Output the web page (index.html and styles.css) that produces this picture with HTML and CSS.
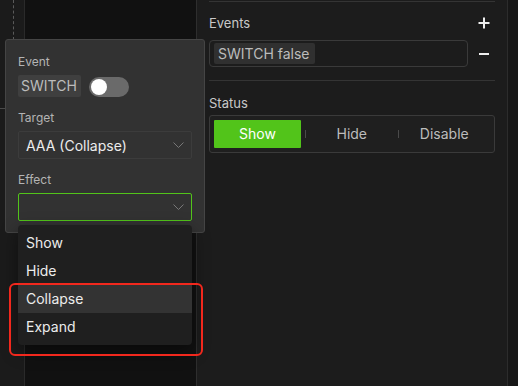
FILE: index.html
```html
<!DOCTYPE html>
<html lang="en">
<head>
    <meta charset="UTF-8">
    <meta name="viewport" content="width=device-width, initial-scale=1.0">
    <title>Interaction Editor</title>
    <link rel="stylesheet" href="styles.css">
</head>
<body>
    <div class="workspace">
        <aside class="rail"><span class="guide"></span><span class="tick"></span></aside>
        <main class="canvas"></main>

        <section class="panel">
            <div class="divider first"></div>

            <div class="events">
                <span class="panel-label">Events</span>
                <button class="icon-btn" title="Add">
                    <svg width="12" height="12" viewBox="0 0 12 12"><path d="M6 0.5v11M0.5 6h11" stroke="#eeeeee" stroke-width="2"/></svg>
                </button>
                <div class="events-box"><span class="tag">SWITCH false</span></div>
                <button class="icon-btn" title="Remove">
                    <svg width="12" height="12" viewBox="0 0 12 12"><path d="M1 6h10" stroke="#eeeeee" stroke-width="2"/></svg>
                </button>
            </div>

            <div class="divider"></div>

            <div class="status">
                <span class="panel-label">Status</span>
                <div class="segmented">
                    <span class="segment active">Show</span>
                    <span class="sep"></span>
                    <span class="segment">Hide</span>
                    <span class="sep"></span>
                    <span class="segment">Disable</span>
                </div>
            </div>
        </section>

        <div class="edge"></div>
    </div>

    <!-- event editor popover -->
    <div class="popover">
        <div class="field">
            <span class="field-label">Event</span>
            <div class="event-row">
                <span class="tag light">SWITCH</span>
                <span class="toggle"><span class="knob"></span></span>
            </div>
        </div>
        <div class="field">
            <span class="field-label">Target</span>
            <div class="select">
                <span>AAA (Collapse)</span>
                <svg width="11" height="7" viewBox="0 0 11 7"><path d="M0.5 0.5l5 5 5-5" fill="none" stroke="#777777"/></svg>
            </div>
        </div>
        <div class="field">
            <span class="field-label">Effect</span>
            <div class="select focused">
                <span></span>
                <svg width="11" height="7" viewBox="0 0 11 7"><path d="M0.5 0.5l5 5 5-5" fill="none" stroke="#777777"/></svg>
            </div>
        </div>
    </div>

    <ul class="dropdown">
        <li>Show</li>
        <li>Hide</li>
        <li class="hover">Collapse</li>
        <li>Expand</li>
    </ul>

    <div class="annotation"></div>
</body>
</html>
```

FILE: styles.css
```css
/* General Styles */
body, html {
    margin: 0;
    padding: 0;
    height: 100%;
    overflow: hidden;
    font-family: 'Inter', 'Noto Sans', sans-serif;
    background-color: #1b1b1b;
    color: #e6e6e6;
}

.workspace {
    display: flex;
    height: 386px;
}

.rail {
    width: 24px;
    background: #1b1b1b;
    border-right: 1px solid #2a2a2a;
    position: relative;
}

.rail .guide {
    position: absolute;
    left: 13px;
    top: 0;
    height: 40px;
    border-left: 1px dashed #5a5a5a;
}

.rail .tick {
    position: absolute;
    left: 0;
    top: 108px;
    width: 8px;
    border-top: 1px solid #4a4a4a;
}

.canvas {
    width: 171px;
    background: #111111;
    border-right: 1px solid #2e2e2e;
}

.panel {
    width: 286px;
    padding: 0 12px;
    background: #1c1c1c;
    border-right: 1px solid #2c2c2c;
}

.edge {
    flex: 1;
    background: #171717;
}

.divider {
    height: 1px;
    background: #343434;
    margin-top: 13px;
}

.divider.first {
    margin-top: 1px;
}

.panel-label {
    font-size: 13px;
    line-height: 18px;
    color: #c8c8c8;
}

.events {
    display: grid;
    grid-template-columns: 259px 1fr;
    row-gap: 8px;
    margin-top: 12px;
    align-items: center;
}

.icon-btn {
    justify-self: end;
    margin-right: 5px;
    padding: 0;
    border: none;
    background: none;
    display: flex;
    cursor: pointer;
}

.events-box {
    border: 1px solid #3a3a3a;
    border-radius: 4px;
    padding: 2px 4px;
    display: flex;
}

.tag {
    background: #303030;
    color: #bcbcbc;
    font-size: 14px;
    line-height: 21px;
    padding: 0 5px 0 4px;
    border-radius: 2px;
}

.status {
    margin-top: 11px;
}

.segmented {
    margin-top: 3px;
    display: flex;
    align-items: center;
    padding: 4px;
    background: #1f1f1f;
    border: 1px solid #3a3a3a;
    border-radius: 3px;
}

.segment {
    flex: 1;
    text-align: center;
    font-size: 14px;
    line-height: 28px;
    color: #bcbcbc;
}

.segment.active {
    flex: none;
    width: 87px;
    margin-right: 4px;
    background: #52c41a;
    color: #ffffff;
    border-radius: 1px;
}

.sep {
    width: 1px;
    height: 8px;
    background: #4a4a4a;
}

/* Popover */
.popover {
    position: absolute;
    left: 5px;
    top: 39px;
    width: 174px;
    padding: 14px 12px 11px;
    background: #323232;
    border: 1px solid #454545;
    border-radius: 3px;
}

.field + .field {
    margin-top: 13px;
}

.field-label {
    display: block;
    font-size: 12px;
    line-height: 16px;
    margin-bottom: 5px;
    color: #b4b4b4;
}

.event-row {
    display: flex;
    align-items: center;
    gap: 8px;
}

.tag.light {
    background: #3f3f3f;
    line-height: 22px;
    padding: 0 4px 0 3px;
}

.toggle {
    width: 40px;
    height: 20px;
    border-radius: 10px;
    background: #6a6a6a;
    position: relative;
    margin-top: 1px;
}

.toggle .knob {
    position: absolute;
    left: 2px;
    top: 2px;
    width: 16px;
    height: 16px;
    border-radius: 50%;
    background: #ffffff;
}

.select {
    height: 26px;
    border: 1px solid #3c3c3c;
    border-radius: 2px;
    padding: 0 7px;
    display: flex;
    align-items: center;
    justify-content: space-between;
    font-size: 14px;
    color: #ececec;
}

.select.focused {
    border-color: #52c41a;
}

/* Dropdown */
.dropdown {
    position: absolute;
    left: 18px;
    top: 225px;
    width: 174px;
    margin: 0;
    padding: 4px 0;
    list-style: none;
    background: #1f1f1f;
    border-radius: 4px;
    box-shadow: 0 6px 18px rgba(0, 0, 0, 0.45);
}

.dropdown li {
    line-height: 28px;
    padding-left: 8px;
    font-size: 14px;
    color: #ececec;
}

.dropdown li.hover {
    background: #333333;
}

.annotation {
    position: absolute;
    left: 9px;
    top: 283px;
    width: 190px;
    height: 69px;
    border: 2px solid #f2281d;
    border-radius: 6px;
}
```
